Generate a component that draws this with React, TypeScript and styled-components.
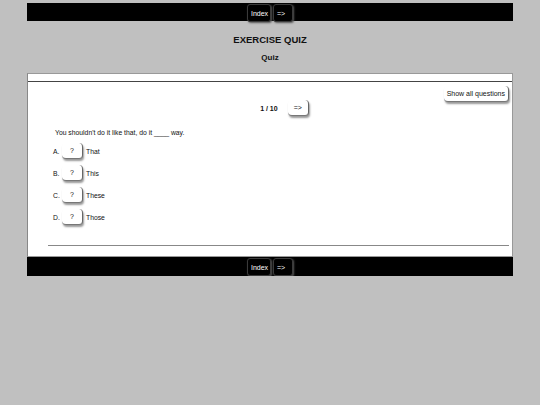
import React from "react";
import styled, { createGlobalStyle } from "styled-components";

const Global = createGlobalStyle`
  html, body { margin: 0; padding: 0; background: #c0c0c0; }
  body { font-family: "Liberation Sans", Arial, sans-serif; color: #111; }
`;

const Page = styled.div`
  width: 486px;
  margin: 3px auto 0;
  display: flex;
  flex-direction: column;
`;

const NavBar = styled.div<{ $h?: number }>`
  background: #000;
  height: ${(p) => p.$h ?? 18}px;
  display: flex;
  justify-content: center;
  align-items: flex-start;
  gap: 2px;
  padding-top: 1px;
  box-sizing: border-box;
`;

const NavButton = styled.button<{ $w?: number }>`
  background: #000;
  color: #fff;
  border: 1px solid #3a3a3a;
  border-radius: 3px;
  font-family: "Liberation Sans", Arial, sans-serif;
  font-size: 7px;
  height: 18px;
  padding: 0 3px;
  width: ${(p) => (p.$w ? `${p.$w}px` : "auto")};
  text-align: left;
  box-shadow: 1px 1px 2px #555;
  cursor: pointer;
`;

const Header = styled.div`
  display: flex;
  flex-direction: column;
  align-items: center;
  padding: 13px 0 10px;
`;

const Title = styled.h1`
  margin: 0;
  font-size: 9.5px;
  font-weight: bold;
  line-height: 12px;
  color: #111;
`;

const Subtitle = styled.h2`
  margin: 7px 0 0;
  font-size: 8px;
  font-weight: bold;
  line-height: 10px;
  color: #111;
`;

const Panel = styled.div`
  background: #fff;
  border: 1px solid #999;
  border-left-color: #888;
  height: 184px;
  box-sizing: border-box;
  display: flex;
  flex-direction: column;
`;

const PanelTop = styled.div`
  height: 7px;
  border-bottom: 1px solid #444;
`;

const PanelBody = styled.div`
  display: flex;
  flex-direction: column;
  padding: 4px 3px 0 20px;
`;

const ToolRow = styled.div`
  display: flex;
  justify-content: flex-end;
`;

const LightButton = styled.button<{ $pad?: number }>`
  background: #fff;
  border: none;
  border-right: 1px solid #666;
  border-bottom: 1px solid #777;
  border-radius: 4px;
  box-shadow: 1px 2px 2px #999;
  font-family: "Liberation Sans", Arial, sans-serif;
  font-size: 7px;
  color: #111;
  height: 16px;
  padding: 0 ${(p) => p.$pad ?? 3}px;
  cursor: pointer;
`;

const Counter = styled.div`
  display: flex;
  justify-content: center;
  align-items: center;
  gap: 10px;
  margin-top: -2px;
  padding-left: 12px;
`;

const CounterText = styled.span`
  font-size: 7px;
  font-weight: bold;
  color: #111;
`;

const Question = styled.p`
  margin: 13px 0 7px 7px;
  font-size: 6.8px;
  color: #111;
`;

const Options = styled.div`
  display: flex;
  flex-direction: column;
  gap: 6px;
  padding-left: 5px;
`;

const Option = styled.div`
  display: flex;
  align-items: center;
  font-size: 6.8px;
  height: 16px;
  color: #111;
`;

const Letter = styled.span`
  width: 9px;
`;

const AnswerButton = styled(LightButton)`
  width: 21px;
  padding: 0;
  margin-right: 3px;
`;

const Divider = styled.hr`
  margin: 20px 0 0;
  border: none;
  border-top: 1px solid #888;
`;

const options = [
  ["A.", "That"],
  ["B.", "This"],
  ["C.", "These"],
  ["D.", "Those"],
];

function Nav({ h }: { h?: number }) {
  return (
    <NavBar $h={h}>
      <NavButton $w={24}>Index</NavButton>
      <NavButton $w={20}>=&gt;</NavButton>
    </NavBar>
  );
}

export default function App() {
  return (
    <>
      <Global />
      <Page>
        <Nav />
        <Header>
          <Title>EXERCISE QUIZ</Title>
          <Subtitle>Quiz</Subtitle>
        </Header>
        <Panel>
          <PanelTop />
          <PanelBody>
            <ToolRow>
              <LightButton $pad={3}>Show all questions</LightButton>
            </ToolRow>
            <Counter>
              <CounterText>1 / 10</CounterText>
              <LightButton $pad={6}>=&gt;</LightButton>
            </Counter>
            <Question>You shouldn't do it like that, do it ____ way.</Question>
            <Options>
              {options.map(([l, t]) => (
                <Option key={l}>
                  <Letter>{l}</Letter>
                  <AnswerButton>?</AnswerButton>
                  <span>{t}</span>
                </Option>
              ))}
            </Options>
            <Divider />
          </PanelBody>
        </Panel>
        <Nav h={19} />
      </Page>
    </>
  );
}
